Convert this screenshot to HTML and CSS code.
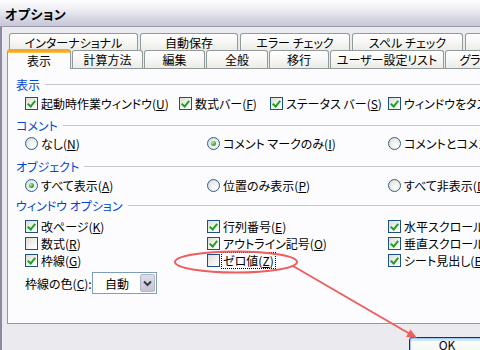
FILE: index.html
```html
<!DOCTYPE html>
<html lang="ja">
<head>
<meta charset="utf-8">
<title>オプション</title>
<link rel="stylesheet" href="styles.css">
</head>
<body>
<div class="window">
  <div class="titlebar">オプション</div>
  <div class="body">
    <div class="tabs">
      <div class="tabrow back">
        <div class="tab">インターナショナル</div>
        <div class="tab">自動保存</div>
        <div class="tab">エラー チェック</div>
        <div class="tab">スペル チェック</div>
        <div class="tab">&nbsp;</div>
      </div>
      <div class="tabrow front">
        <div class="tab sel">表示</div>
        <div class="tab">計算方法</div>
        <div class="tab">編集</div>
        <div class="tab">全般</div>
        <div class="tab">移行</div>
        <div class="tab">ユーザー設定リスト</div>
        <div class="tab">グラフ</div>
      </div>
    </div>
    <div class="panel">
      <div class="ghead h1"><span>表示</span></div>
      <div class="row r1 cols4">
        <div class="item"><span class="cb on"></span><span class="lbl">起動時作業ウィンドウ(<u>U</u>)</span></div>
        <div class="item"><span class="cb on"></span><span class="lbl">数式バー(<u>F</u>)</span></div>
        <div class="item"><span class="cb on"></span><span class="lbl">ステータス バー(<u>S</u>)</span></div>
        <div class="item"><span class="cb on"></span><span class="lbl">ウィンドウをタスク バーに表示(<u>W</u>)</span></div>
      </div>

      <div class="ghead h2"><span>コメント</span></div>
      <div class="row r2 cols3">
        <div class="item"><span class="rb"></span><span class="lbl">なし(<u>N</u>)</span></div>
        <div class="item"><span class="rb on"></span><span class="lbl">コメント マークのみ(<u>I</u>)</span></div>
        <div class="item"><span class="rb"></span><span class="lbl">コメントとコメント マーク(<u>M</u>)</span></div>
      </div>

      <div class="ghead h3"><span>オブジェクト</span></div>
      <div class="row r3 cols3">
        <div class="item"><span class="rb on"></span><span class="lbl">すべて表示(<u>A</u>)</span></div>
        <div class="item"><span class="rb"></span><span class="lbl">位置のみ表示(<u>P</u>)</span></div>
        <div class="item"><span class="rb"></span><span class="lbl">すべて非表示(<u>D</u>)</span></div>
      </div>

      <div class="ghead h4"><span>ウィンドウ オプション</span></div>
      <div class="opts">
        <div class="row orow cols3">
          <div class="item"><span class="cb on"></span><span class="lbl">改ページ(<u>K</u>)</span></div>
          <div class="item"><span class="cb on"></span><span class="lbl">行列番号(<u>E</u>)</span></div>
          <div class="item"><span class="cb on"></span><span class="lbl">水平スクロール バー(<u>T</u>)</span></div>
        </div>
        <div class="row orow cols3">
          <div class="item"><span class="cb"></span><span class="lbl">数式(<u>R</u>)</span></div>
          <div class="item"><span class="cb on"></span><span class="lbl">アウトライン記号(<u>O</u>)</span></div>
          <div class="item"><span class="cb on"></span><span class="lbl">垂直スクロール バー(<u>V</u>)</span></div>
        </div>
        <div class="row orow cols3">
          <div class="item"><span class="cb on"></span><span class="lbl">枠線(<u>G</u>)</span></div>
          <div class="item"><span class="cb"></span><span class="lbl focus">ゼロ値(<u>Z</u>)</span></div>
          <div class="item"><span class="cb on"></span><span class="lbl">シート見出し(<u>B</u>)</span></div>
        </div>
      </div>

      <div class="row colorrow">
        <span class="clabel">枠線の色(<u>C</u>):</span>
        <div class="select"><span class="sval">自動</span><span class="sbtn"><svg width="9" height="7" viewBox="0 0 9 7"><path d="M1 1.5 L4.5 5 L8 1.5" fill="none" stroke="#3a3a4a" stroke-width="2"/></svg></span></div>
      </div>
    </div>
    <div class="footer">
      <div class="okbtn">OK</div>
    </div>
  </div>
  <svg class="annot" width="480" height="350" viewBox="0 0 480 350">
    <ellipse cx="236" cy="262" rx="61" ry="10.5" fill="none" stroke="#ef5e5e" stroke-width="2"/>
    <path d="M293 266 L410 334" fill="none" stroke="#ef5e5e" stroke-width="2"/>
    <polygon points="417,338 406,337 410.5,329.5" fill="#ef5e5e"/>
  </svg>
</div>
</body>
</html>
```

FILE: styles.css
```css
* { box-sizing: border-box; }
html, body { margin: 0; padding: 0; }
body {
  width: 480px;
  height: 350px;
  overflow: hidden;
  font-family: "Noto Sans CJK JP", "Noto Sans", sans-serif;
  font-size: 12px;
  font-feature-settings: "palt";
  color: #000;
  background: #e4e4e9;
}
u { text-decoration: underline; text-underline-offset: 1px; }

.window {
  position: relative;
  width: 480px;
  height: 350px;
  overflow: hidden;
}

.titlebar {
  height: 27px;
  padding-left: 5px;
  display: flex;
  align-items: center;
  font-weight: bold;
  font-size: 13px;
  letter-spacing: 0.5px;
  background: linear-gradient(#fdfdfe 0%, #eeeef4 35%, #d4d4e2 75%, #c6c6d6 100%);
  border-bottom: 1px solid #9a9aae;
}

.body {
  height: 323px;
  border-left: 2px solid #8a8aa2;
  background: #ebebef;
  padding-top: 6px;
}

.tabs { display: flex; flex-direction: column; }
.tabrow { display: grid; }
.tabrow.back {
  height: 17px;
  margin-left: 7px;
  grid-template-columns: 129px 98px 110px 111px 40px;
  grid-template-rows: 17px;
  column-gap: 2px;
}
.tabrow.front {
  height: 18px;
  margin-left: 5px;
  grid-template-columns: 64px 71px 61px 62px 60px 114px 60px;
  grid-template-rows: 18px;
  column-gap: 1px;
  align-items: end;
}
.tab {
  height: 100%;
  border: 1px solid #919b9c;
  border-bottom: none;
  border-radius: 3px 3px 0 0;
  background: linear-gradient(#ffffff 0%, #f7f7f5 50%, #ecebe6 100%);
  display: flex;
  align-items: center;
  justify-content: center;
  white-space: nowrap;
  overflow: hidden;
  font-size: 12px;
}
.tab.sel {
  position: relative;
  z-index: 2;
  height: 20px;
  margin-bottom: -1px;
  align-self: end;
  background: #fcfcfe;
  border-top: 3px solid #f6a534;
  box-shadow: inset 0 1px 0 #ffc83c;
}

.panel {
  height: 256px;
  margin-left: 5px;
  margin-right: -20px;
  border: 1px solid #919b9c;
  background: #fcfcfe;
  position: relative;
  z-index: 1;
}

.ghead {
  height: 16px;
  display: flex;
  align-items: center;
  padding-left: 8px;
  color: #0046d5;
}
.ghead::after {
  content: "";
  flex: 1;
  height: 1px;
  background: #c8c8d2;
  margin-left: 5px;
}
.h1 { margin-top: 7px; }
.h2 { margin-top: 5px; }
.h3 { margin-top: 6px; }
.h4 { margin-top: 3px; }

.row {
  display: flex;
  align-items: center;
  padding-left: 17px;
  height: 18px;
}
.r1 { margin-top: 2px; }
.r2 { margin-top: 1px; }
.r3 { margin-top: 2px; }
.opts { margin-top: 5px; }
.orow { height: 17px; }

.item {
  display: flex;
  align-items: center;
  white-space: nowrap;
  flex: none;
}
.cols4 .item:nth-child(1) { width: 154px; }
.cols4 .item:nth-child(2) { width: 91px; }
.cols4 .item:nth-child(3) { width: 118px; }
.cols3 .item:nth-child(1) { width: 182px; }
.cols3 .item:nth-child(2) { width: 181px; }

.lbl { margin-left: 3px; line-height: 15px; }
.lbl.focus { outline: 1px dotted #000; outline-offset: 0; padding: 0 1px; margin-left: 2px; }

.cb {
  width: 13px;
  height: 13px;
  flex: none;
  border: 1px solid #1c5180;
  background: linear-gradient(135deg, #dcdcd7 0%, #f0f0ec 50%, #ffffff 100%);
  position: relative;
}
.cb.on::after {
  content: "";
  position: absolute;
  left: 3px;
  top: 1px;
  width: 3px;
  height: 6px;
  border-right: 2px solid #21a121;
  border-bottom: 2px solid #21a121;
  transform: rotate(40deg);
}

.rb {
  width: 13px;
  height: 13px;
  flex: none;
  border-radius: 50%;
  border: 1px solid #2f5d8a;
  background: radial-gradient(circle at 65% 65%, #ffffff 0%, #eeeeea 45%, #d4d4cd 100%);
  position: relative;
}
.rb.on::after {
  content: "";
  position: absolute;
  left: 3px;
  top: 3px;
  width: 5px;
  height: 5px;
  border-radius: 50%;
  background: radial-gradient(circle at 35% 35%, #b8f0b0 0%, #3cb43c 50%, #1f8f1f 100%);
}

.colorrow {
  margin-top: 3px;
  height: 22px;
}
.clabel { width: 67px; flex: none; white-space: nowrap; }
.select {
  width: 65px;
  height: 22px;
  border: 1px solid #7f9db9;
  background: #fff;
  display: flex;
  align-items: center;
  padding: 1px;
}
.sval { flex: 1; padding-left: 11px; }
.sbtn {
  width: 15px;
  height: 18px;
  background: linear-gradient(#dedeea, #c4c4d6);
  border: 1px solid #b4b4c8;
  border-radius: 2px;
  display: flex;
  align-items: center;
  justify-content: center;
}

.footer {
  padding-top: 13px;
  padding-left: 407px;
}
.okbtn {
  width: 76px;
  height: 23px;
  border: 1px solid #003c74;
  border-radius: 3px;
  background: linear-gradient(#ffffff, #f0f0ea);
  box-shadow: inset 0 0 0 1px #a4c4f4, inset 0 2px 0 1px #cee7ff;
  display: flex;
  align-items: flex-start;
  justify-content: center;
  line-height: 14px;
  padding-top: 0;
  font-size: 12px;
}

.annot {
  position: absolute;
  left: 0;
  top: 0;
  pointer-events: none;
  z-index: 5;
}
```
